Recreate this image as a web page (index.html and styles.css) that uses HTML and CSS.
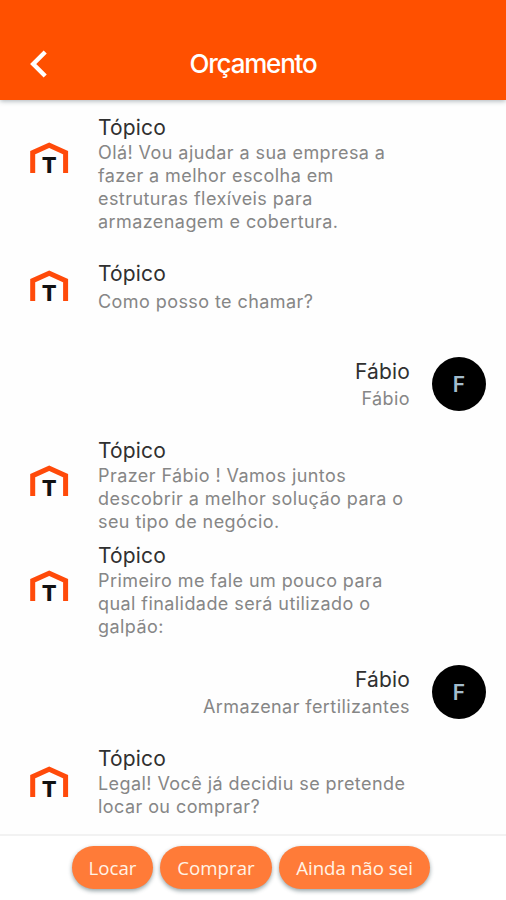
FILE: index.html
```html
<!DOCTYPE html>
<html lang="pt-BR">
<head>
<meta charset="utf-8">
<title>Orçamento</title>
<link rel="stylesheet" href="styles.css">
</head>
<body>
<div class="app">
  <header class="bar">
    <svg class="back" viewBox="0 0 18 28"><path d="M15.2 2L3.2 14l12 12" fill="none" stroke="#fff" stroke-width="4.4"/></svg>
    <h1 class="title">Orçamento</h1>
  </header>
  <main class="chat">
    <article class="msg">
      <svg class="logo low" viewBox="0 0 40 32"><path class="roof" d="M3.7 31V10.6L20.2 3.2l16.4 7.4V31"/><text x="20.2" y="31" class="logo-letter">T</text></svg>
      <div><h2 class="name">Tópico</h2><p class="text">Olá! Vou ajudar a sua empresa a<br>fazer a melhor escolha em<br>estruturas flexíveis para<br>armazenagem e cobertura.</p></div>
    </article>
    <article class="msg single second">
      <svg class="logo high" viewBox="0 0 40 32"><path class="roof" d="M3.7 31V10.6L20.2 3.2l16.4 7.4V31"/><text x="20.2" y="31" class="logo-letter">T</text></svg>
      <div><h2 class="name">Tópico</h2><p class="text">Como posso te chamar?</p></div>
    </article>
    <article class="msg single user third">
      <div><h2 class="name">Fábio</h2><p class="text">Fábio</p></div>
      <span class="avatar">F</span>
    </article>
    <article class="msg fourth">
      <svg class="logo low" viewBox="0 0 40 32"><path class="roof" d="M3.7 31V10.6L20.2 3.2l16.4 7.4V31"/><text x="20.2" y="31" class="logo-letter">T</text></svg>
      <div><h2 class="name">Tópico</h2><p class="text">Prazer Fábio ! Vamos juntos<br>descobrir a melhor solução para o<br>seu tipo de negócio.</p></div>
    </article>
    <article class="msg fifth">
      <svg class="logo low" viewBox="0 0 40 32"><path class="roof" d="M3.7 31V10.6L20.2 3.2l16.4 7.4V31"/><text x="20.2" y="31" class="logo-letter">T</text></svg>
      <div><h2 class="name">Tópico</h2><p class="text">Primeiro me fale um pouco para<br>qual finalidade será utilizado o<br>galpão:</p></div>
    </article>
    <article class="msg single user sixth">
      <div><h2 class="name">Fábio</h2><p class="text">Armazenar fertilizantes</p></div>
      <span class="avatar">F</span>
    </article>
    <article class="msg seventh">
      <svg class="logo mid" viewBox="0 0 40 32"><path class="roof" d="M3.7 31V10.6L20.2 3.2l16.4 7.4V31"/><text x="20.2" y="31" class="logo-letter">T</text></svg>
      <div><h2 class="name">Tópico</h2><p class="text">Legal! Você já decidiu se pretende<br>locar ou comprar?</p></div>
    </article>
  </main>
  <footer class="actions">
    <button class="chip locar">Locar</button>
    <button class="chip comprar">Comprar</button>
    <button class="chip ainda">Ainda não sei</button>
  </footer>
</div>
</body>
</html>
```
FILE: styles.css
```css
* { box-sizing: border-box; margin: 0; padding: 0; }
body { background: #fff; font-family: Inter, "Liberation Sans", sans-serif; }
.app { width: 506px; height: 900px; display: flex; flex-direction: column; overflow: hidden; background: #fefefe; }
.bar {
  height: 100px; flex: none; display: grid; grid-template-columns: 60px 1fr 60px;
  align-items: center; padding-top: 27px; background: #ff5000;
  box-shadow: 0 1px 5px rgba(40, 60, 70, .4);
}
.back { width: 18px; height: 28px; margin-left: 30px; }
.title { font-size: 26px; font-weight: 500; line-height: 32px; letter-spacing: -1.2px; color: #fff; text-align: center; }
.chat { height: 734px; flex: none; padding-top: 16px; }
.msg { display: flex; align-items: flex-start; padding-left: 29px; }
.logo { width: 40px; height: 32px; margin-right: 29px; flex: none; overflow: visible; }
.logo.low { margin-top: 26px; }
.logo.mid { margin-top: 19px; }
.logo.high { margin-top: 8px; }
.roof { fill: none; stroke: #ff4a0a; stroke-width: 5; }
.logo-letter { font: 800 22px Inter, "Liberation Sans", sans-serif; text-anchor: middle; fill: #111; }
.name { font-size: 21px; font-weight: 400; line-height: 24px; letter-spacing: .15px; color: #303030; }
.text { padding-top: 1px; margin-bottom: -1px; font-size: 18px; line-height: 23px; letter-spacing: .43px; color: #868686; white-space: nowrap; }
.single .text { margin-top: 3px; }
.user { justify-content: flex-end; padding: 0 20px 0 0; text-align: right; }
.user .name { position: relative; top: 1px; }
.avatar {
  width: 54px; height: 54px; margin: -2px 0 0 22px; flex: none; border-radius: 50%;
  display: flex; align-items: center; justify-content: center;
  background: #000; color: #a3bccd; font-size: 21px; font-weight: 600;
}
.second { margin-top: 30px; }
.third { margin-top: 47px; }
.fourth { margin-top: 28px; }
.fifth { margin-top: 12px; }
.sixth { margin-top: 30px; }
.seventh { margin-top: 28px; }
.actions {
  height: 66px; flex: none; display: flex; justify-content: center; align-items: flex-start; gap: 7px;
  padding: 10px 4px 0 0; border-top: 2px solid #f2f2f2; background: #fff;
}
.chip {
  height: 43px; border: 0; border-radius: 22px; background: #ff7b38; color: #fff3e6;
  font: 400 18.7px/43px "Open Sans", sans-serif; box-shadow: 0 2px 4px rgba(20, 50, 60, .45);
}
.locar { width: 81px; }
.comprar { width: 112px; }
.ainda { width: 151px; }
```
